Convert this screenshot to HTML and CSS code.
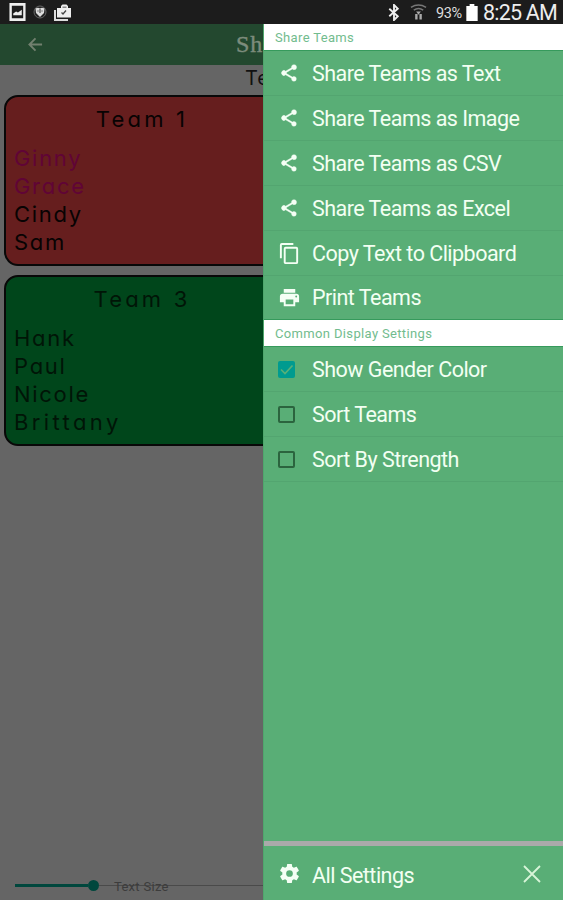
FILE: index.html
```html
<!DOCTYPE html>
<html lang="en">
<head>
<meta charset="utf-8">
<title>Share Teams</title>
<link rel="stylesheet" href="styles.css">
</head>
<body>
<svg class="defs" width="0" height="0">
  <symbol id="share" viewBox="0 0 24 24"><path stroke="#f5fff5" stroke-width=".5" d="M18 16.100c-.8 0-1.400.3-2 .8l-7.100-4.200c.1-.2.1-.5.1-.7s0-.5-.1-.7L16 7.200c.5.5 1.200.8 2 .8a3 3 0 1 0-3-3c0 .2 0 .5.1.7L8 9.800A3 3 0 1 0 8 14.200l7.100 4.200c-.1.2-.1.4-.1.6a2.900 2.900 0 1 0 3-2.900z"/></symbol>
</svg>
<div class="screen">
  <header class="status">
    <svg class="s-image" viewBox="0 0 17 19"><path fill="#eee" fill-rule="evenodd" d="M0 0h17v19H0zM2.500 3v13h12V3z"/><path fill="#eee" d="M4 13V11l3-2 2 1 4-3v6z"/></svg>
    <svg class="s-badge" viewBox="0 0 14 14"><circle cx="7" cy="7" r="6" fill="#242424" stroke="#666"/><path fill="#ddd" d="M2.500 3.500Q5 2 7 3.500 9 2 11.500 3.500L11 8 7 12 3 8z"/><path stroke="#333" d="M7 4v4M5 5.500v1M9 5.500v1"/></svg>
    <svg class="s-bag" viewBox="0 0 18 17"><path fill="#eee" d="M3 4h4V2l1.500-1.500h4L14 2v2h3v9.500H3z"/><path fill="#888" d="M8.500 4V2.500h4V4z"/><path fill="none" stroke="#ddd" stroke-width="2" d="M1 6v10h13"/><path fill="none" stroke="#444" stroke-width="1.300" d="m7.500 8.500 1.500 1.500 3-3.500"/></svg>
    <span class="grow"></span>
    <svg class="s-bt" viewBox="0 0 12 18"><path fill="none" stroke="#eee" stroke-width="2" d="m1 5 9 8-4 4V1l4 4-9 8"/></svg>
    <svg class="s-wifi" viewBox="0 0 18 18"><g fill="none" stroke="#777" stroke-width="1.600"><path d="M1 4q8-5 16 0M4 7q5-3.500 10 0"/></g><path fill="#aaa" d="M6.500 8.500h5L9 12zM5.500 11h2.500v6H5.500zM10 11h2.500v6H10z"/></svg>
    <span class="pct">93%</span>
    <svg class="s-batt" viewBox="0 0 12 18"><path fill="#fff" d="M3.500 0h5v2H12v16H0V2h3.500z"/></svg>
    <span class="clock">8:25 AM</span>
  </header>
  <div class="appbar">
    <svg class="back" viewBox="0 0 16 16"><path fill="none" stroke="#72806f" stroke-width="2" d="M15 8H2M8 1.500 1.500 8 8 14.500"/></svg>
    <h1 class="apptitle">Sh</h1>
  </div>
  <div class="subtitle hand">Te</div>
  <main class="teams">
    <section class="team red hand">
      <h2>Team 1</h2>
      <ul><li class="girl">Ginny</li><li class="girl">Grace</li><li>Cindy</li><li>Sam</li></ul>
    </section>
    <section class="team green hand">
      <h2>Team 3</h2>
      <ul><li>Hank</li><li>Paul</li><li>Nicole</li><li class="loose">Brittany</li></ul>
    </section>
  </main>
  <footer class="slider">
    <span class="fill"></span><span class="knob"></span><span class="track"><span class="size-label">Text Size</span></span>
  </footer>

  <aside class="drawer">
    <h3 class="section">Share Teams</h3>
    <div class="row"><svg class="ico"><use href="#share"/></svg><span>Share Teams as Text</span></div>
    <div class="row"><svg class="ico"><use href="#share"/></svg><span>Share Teams as Image</span></div>
    <div class="row"><svg class="ico"><use href="#share"/></svg><span>Share Teams as CSV</span></div>
    <div class="row"><svg class="ico"><use href="#share"/></svg><span>Share Teams as Excel</span></div>
    <div class="row"><svg class="ico big" viewBox="0 0 24 24"><path d="M16 1H4a2 2 0 0 0-2 2v14h2V3h12zm3 4H8a2 2 0 0 0-2 2v14c0 1.100.9 2 2 2h11a2 2 0 0 0 2-2V7a2 2 0 0 0-2-2zm0 16H8V7h11z"/></svg><span>Copy Text to Clipboard</span></div>
    <div class="row last"><svg class="ico big" viewBox="0 0 24 24"><path d="M19 8H5a3 3 0 0 0-3 3v6h4v4h12v-4h4v-6a3 3 0 0 0-3-3zm-3 11H8v-5h8zm3-7a1 1 0 1 1 0-2 1 1 0 0 1 0 2zm-1-9H6v4h12z"/></svg><span>Print Teams</span></div>
    <h3 class="section second">Common Display Settings</h3>
    <div class="row"><span class="check on"><svg viewBox="0 0 17 17"><path fill="none" stroke="#58b078" stroke-width="1.700" d="m3 8.500 4 4 7.500-8"/></svg></span><span>Show Gender Color</span></div>
    <div class="row"><span class="check"></span><span>Sort Teams</span></div>
    <div class="row"><span class="check"></span><span>Sort By Strength</span></div>
    <div class="bottom">
      <svg class="ico gear" viewBox="0 0 24 24"><path d="M19.430 12.980c.04-.32.07-.64.07-.98s-.03-.66-.07-.98l2.110-1.650c.19-.15.24-.42.12-.64l-2-3.460c-.12-.22-.39-.3-.61-.22l-2.490 1c-.52-.4-1.080-.73-1.690-.98l-.38-2.650A.49.49 0 0 0 14 2h-4c-.25 0-.46.18-.49.42l-.38 2.650c-.61.25-1.170.59-1.690.98l-2.490-1c-.23-.09-.49 0-.61.22l-2 3.460c-.13.22-.07.49.12.64l2.110 1.650c-.04.32-.07.65-.07.98s.03.66.07.98l-2.110 1.650c-.19.15-.24.42-.12.64l2 3.460c.12.22.39.3.61.22l2.490-1c.52.4 1.080.73 1.690.98l.38 2.650c.03.24.24.42.49.42h4c.25 0 .46-.18.49-.42l.38-2.650c.61-.25 1.170-.59 1.690-.98l2.490 1c.23.09.49 0 .61-.22l2-3.460c.12-.22.07-.49-.12-.64zM12 15.500a3.500 3.500 0 1 1 0-7 3.500 3.500 0 0 1 0 7z"/></svg>
      <span>All Settings</span>
      <svg class="close" viewBox="0 0 18 18"><path fill="none" stroke="#d8f5d8" stroke-width="1.800" d="m1 1 16 16M17 1 1 17"/></svg>
    </div>
  </aside>
</div>
</body>
</html>
```
FILE: styles.css
```css
* { box-sizing: border-box; }
body { margin: 0; font-family: Roboto, sans-serif; }
h1, h2, h3, ul { margin: 0; padding: 0; font-weight: 400; list-style: none; }
svg { display: block; flex: none; }
.defs { position: absolute; }
.screen { position: relative; width: 563px; height: 900px; overflow: hidden; background: #656565; display: flex; flex-direction: column; }
.status { height: 24px; flex: none; background: #1c1c1c; color: #eee; display: flex; align-items: center; padding: 0 6px 0 9px; }
.s-image { width: 17px; height: 18px; }
.s-badge { width: 14px; height: 14px; margin-left: 7px; }
.s-bag { width: 18px; height: 17px; margin-left: 7px; }
.grow { flex: 1; }
.s-bt { width: 12px; height: 17px; margin-right: 10px; }
.s-wifi { width: 17px; height: 18px; margin-right: 9px; }
.pct { width: 30px; font-size: 14.500px; white-space: nowrap; letter-spacing: -.4px; color: #ddd; padding-top: 2px; }
.s-batt { width: 12px; height: 17px; margin-right: 5px; }
.clock { width: 74px; font-size: 21.500px; white-space: nowrap; letter-spacing: -.8px; }
.appbar { height: 41px; flex: none; background: #23482f; display: flex; align-items: center; }
.back { width: 15px; height: 15px; margin-left: 28px; }
.apptitle { margin-left: 193px; font-family: "Liberation Serif", serif; font-size: 24px; letter-spacing: 1px; color: #7d8c7c; -webkit-text-stroke: .4px #7d8c7c; }
.hand { font-family: Inter, "Noto Sans", sans-serif; font-feature-settings: "cv11" 1, "calt" 0; }
.subtitle { height: 30px; flex: none; padding-left: 245px; font-size: 20px; line-height: 26px; letter-spacing: 1px; color: #111; }
.teams { display: grid; grid-template-columns: 276px; gap: 9px; padding-left: 4px; }
.team { height: 171px; border: 2px solid #080808; border-radius: 14px; padding: 6px 8px; color: #080303; font-size: 22px; letter-spacing: 1.700px; }
.team h2 { font-size: 22px; line-height: 32px; text-align: center; letter-spacing: 3.200px; }
.team ul { padding-top: 9px; }
.team li { height: 28px; line-height: 28px; }
.team .loose { letter-spacing: 3.400px; }
.red { background: #661e1e; }
.green { background: #00461b; color: #001507; }
.team .girl { color: #600436; }
.slider { margin-top: auto; height: 30px; display: flex; align-items: center; padding-left: 15px; }
.fill { width: 73px; height: 3px; background: #00473d; }
.knob { width: 11px; height: 11px; border-radius: 50%; background: #00473d; }
.track { flex: 1; height: 1px; background: #4a4a4a; display: flex; align-items: center; padding-left: 15px; }
.size-label { font-size: 13px; color: #3c3c3c; line-height: 16px; padding-top: 3px; letter-spacing: .3px; }
.drawer { position: absolute; left: 263px; top: 24px; width: 300px; height: 876px; background: #59ae76; color: #f2fff2; display: flex; flex-direction: column; border-left: 1px solid #4fa66c; }
.section { height: 27px; flex: none; background: #fff; color: #72bc8e; font-size: 13px; line-height: 27px; padding-left: 11px; letter-spacing: .35px; border-bottom: 1px solid #369a5c; }
.second { border-top: 1px solid #369a5c; height: 28px; }
.row { height: 45px; flex: none; display: flex; align-items: center; border-bottom: 1px solid #53a570; padding-left: 14px; font-size: 21.500px; letter-spacing: -.52px; white-space: nowrap; }
.row.last { border-bottom: 0; height: 43px; }
.ico { width: 20px; height: 20px; margin: 0 13px 0 1px; fill: #f5fff5; }
.ico.big { width: 23px; height: 23px; margin: 0 11.500px 0 -.5px; }
.check { width: 17px; height: 17px; border: 2px solid #2b643e; border-radius: 2px; margin-right: 17px; }
.check.on { background: #009b8f; border: 0; }
.bottom { margin-top: auto; height: 59px; flex: none; border-top: 5px solid #aaa; display: flex; align-items: center; padding: 5px 22px 0 14px; font-size: 21.500px; letter-spacing: -.52px; }
.bottom .gear { width: 23px; height: 23px; margin: -5px 11.500px 0 -.5px; }
.close { width: 18px; height: 18px; margin: -4px 0 0 auto; }
```
